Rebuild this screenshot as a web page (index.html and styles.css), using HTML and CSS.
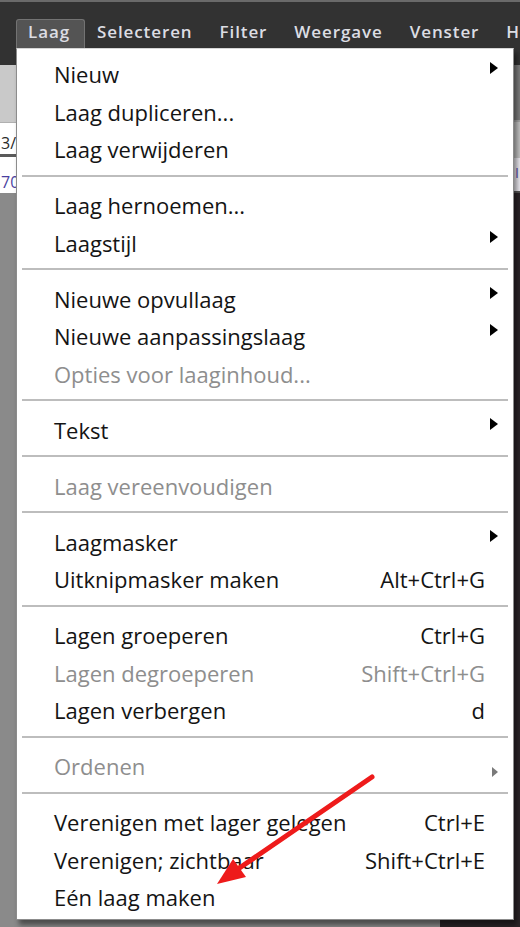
FILE: index.html
```html
<!DOCTYPE html>
<html lang="nl">
<head>
<meta charset="utf-8">
<title>Laag menu</title>
<link rel="stylesheet" href="styles.css">
</head>
<body>
<div class="app">
  <nav class="menubar">
    <span class="mb-item active">Laag</span>
    <span class="mb-item">Selecteren</span>
    <span class="mb-item">Filter</span>
    <span class="mb-item">Weergave</span>
    <span class="mb-item">Venster</span>
    <span class="mb-item">Help</span>
  </nav>
  <div class="workspace">
    <div class="ws-left">
      <div class="opt-bar"></div>
      <div class="field field-a">3/4</div>
      <div class="field field-b">70</div>
      <div class="canvas-bg"></div>
    </div>
    <div class="ws-right">
      <div class="r-bar"></div>
      <div class="r-a"></div>
      <div class="r-b">I</div>
      <div class="r-dark"></div>
    </div>
  </div>

  <div class="dropdown">
    <div class="mi"><span class="lbl">Nieuw</span><span class="sc"></span><span class="sub"></span></div>
    <div class="mi"><span class="lbl">Laag dupliceren...</span><span class="sc"></span><span></span></div>
    <div class="mi"><span class="lbl">Laag verwijderen</span><span class="sc"></span><span></span></div>
    <div class="sep"></div>
    <div class="mi"><span class="lbl">Laag hernoemen...</span><span class="sc"></span><span></span></div>
    <div class="mi"><span class="lbl">Laagstijl</span><span class="sc"></span><span class="sub"></span></div>
    <div class="sep"></div>
    <div class="mi"><span class="lbl">Nieuwe opvullaag</span><span class="sc"></span><span class="sub"></span></div>
    <div class="mi"><span class="lbl">Nieuwe aanpassingslaag</span><span class="sc"></span><span class="sub"></span></div>
    <div class="mi dis"><span class="lbl">Opties voor laaginhoud...</span><span class="sc"></span><span></span></div>
    <div class="sep"></div>
    <div class="mi"><span class="lbl">Tekst</span><span class="sc"></span><span class="sub"></span></div>
    <div class="sep"></div>
    <div class="mi dis"><span class="lbl">Laag vereenvoudigen</span><span class="sc"></span><span></span></div>
    <div class="sep"></div>
    <div class="mi"><span class="lbl">Laagmasker</span><span class="sc"></span><span class="sub"></span></div>
    <div class="mi"><span class="lbl">Uitknipmasker maken</span><span class="sc">Alt+Ctrl+G</span><span></span></div>
    <div class="sep"></div>
    <div class="mi"><span class="lbl">Lagen groeperen</span><span class="sc">Ctrl+G</span><span></span></div>
    <div class="mi dis"><span class="lbl">Lagen degroeperen</span><span class="sc">Shift+Ctrl+G</span><span></span></div>
    <div class="mi"><span class="lbl">Lagen verbergen</span><span class="sc">d</span><span></span></div>
    <div class="sep"></div>
    <div class="mi dis"><span class="lbl">Ordenen</span><span class="sc"></span><span class="sub small"></span></div>
    <div class="sep"></div>
    <div class="mi"><span class="lbl">Verenigen met lager gelegen</span><span class="sc">Ctrl+E</span><span></span></div>
    <div class="mi"><span class="lbl">Verenigen; zichtbaar</span><span class="sc">Shift+Ctrl+E</span><span></span></div>
    <div class="mi"><span class="lbl">Eén laag maken</span><span class="sc"></span><span></span></div>
  </div>

  <svg class="annot" width="520" height="927" viewBox="0 0 520 927" aria-hidden="true">
    <line x1="372" y1="777" x2="238" y2="869" stroke="#ee1b1b" stroke-width="5" stroke-linecap="round"/>
    <polygon points="217,884 233,859 246,877" fill="#ee1b1b"/>
  </svg>
</div>
</body>
</html>
```

FILE: styles.css
```css
* { box-sizing: border-box; }

html, body {
  margin: 0;
  padding: 0;
}

body {
  width: 520px;
  height: 927px;
  overflow: hidden;
  background: #8a8a8a;
  font-family: "Open Sans", "Liberation Sans", sans-serif;
}

.app {
  position: relative;
  width: 520px;
  height: 927px;
  display: flex;
  flex-direction: column;
}

/* ---------- menubar ---------- */
.menubar {
  flex: 0 0 65px;
  background: #323232;
  border-top: 2px solid #6a6a6a;
  display: flex;
  align-items: flex-start;
  padding: 17px 0 0 16px;
  overflow: hidden;
}

.mb-item {
  height: 29px;
  line-height: 23px;
  padding: 0 14px 0 11px;
  font-size: 17px;
  font-weight: 600;
  letter-spacing: 0.9px;
  color: #dcdde3;
  white-space: nowrap;
  border: 1px solid transparent;
  border-bottom: none;
}

.mb-item.active {
  background: #545454;
  border-color: #737373;
  border-radius: 3px 3px 0 0;
}

/* ---------- workspace behind the menu ---------- */
.workspace {
  flex: 1;
  display: flex;
}

.ws-left {
  flex: 0 0 440px;
  display: flex;
  flex-direction: column;
}

.opt-bar {
  height: 57px;
  background: #c9c9c9;
}

.field {
  background: #fff;
  font-size: 16px;
  white-space: nowrap;
  overflow: hidden;
  display: flex;
  align-items: flex-end;
  padding-left: 1px;
}

.field-a {
  height: 35px;
  border-top: 1px solid #b0b0b0;
  border-bottom: 3px solid #5a5a5a;
  color: #2a2a2a;
}

.field-b {
  height: 36px;
  color: #4a3fa0;
}

.canvas-bg {
  flex: 1;
  background: #8a8a8a;
}

.ws-right {
  flex: 1;
  display: flex;
  flex-direction: column;
}

.r-bar {
  height: 57px;
  background: #7e7e7e;
  border-bottom: 2px solid #a8a8a8;
}

.r-a {
  height: 36px;
  background: #c4c4c4;
}

.r-b {
  height: 35px;
  background: #eceaf0;
  color: #5a4aa8;
  font-size: 14px;
  line-height: 30px;
  border-bottom: 2px solid #555;
  padding-left: 75px;
}

.r-dark {
  flex: 1;
  background: #2b2428;
}

/* ---------- dropdown ---------- */
.dropdown {
  position: absolute;
  top: 48px;
  left: 16px;
  width: 498px;
  background: #fff;
  border: 1px solid #8c8c8c;
  border-top-color: #d6d6d6;
  padding: 7px 0 2px;
  box-shadow: 3px 5px 5px rgba(0, 0, 0, 0.45);
}

.mi {
  display: grid;
  grid-template-columns: 1fr auto 8px;
  column-gap: 5px;
  height: 37.5px;
  line-height: 37.5px;
  padding: 0 15px 0 37px;
  font-size: 22px;
  color: #141414;
  white-space: nowrap;
}

.mi.dis {
  color: #8e8e8e;
}

.sc {
  text-align: right;
}

.sub {
  align-self: start;
  margin-top: 6px;
  width: 0;
  height: 0;
  border-left: 8px solid #000;
  border-top: 6.5px solid transparent;
  border-bottom: 6.5px solid transparent;
}

.sub.small {
  margin-top: 19px;
  margin-left: 2px;
  border-left: 6px solid #7a7a7a;
  border-top: 5px solid transparent;
  border-bottom: 5px solid transparent;
}

.sep {
  height: 2px;
  background: #bdbdbd;
  margin: 6px 5px 10.5px 5px;
}

/* ---------- annotation arrow ---------- */
.annot {
  position: absolute;
  top: 0;
  left: 0;
  pointer-events: none;
}
```
